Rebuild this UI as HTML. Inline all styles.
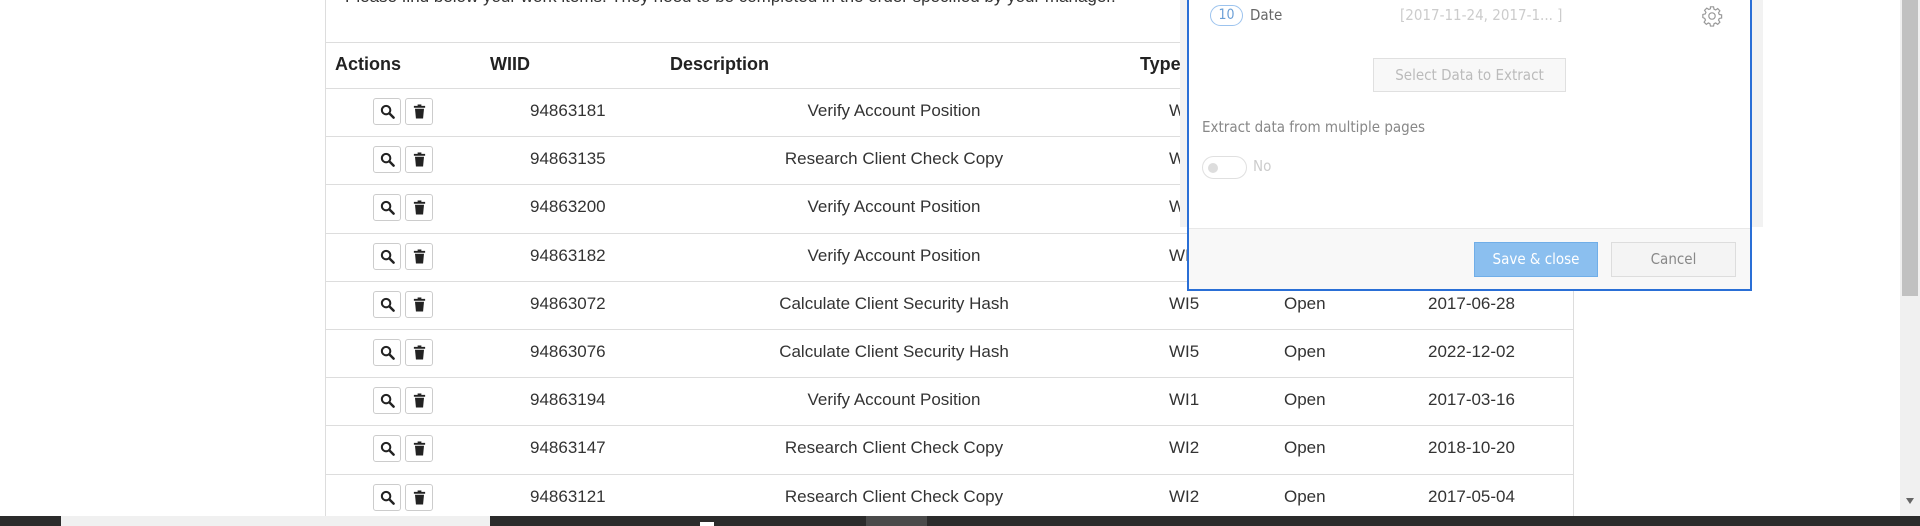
<!DOCTYPE html>
<html><head><meta charset="utf-8"><style>
*{margin:0;padding:0;box-sizing:border-box}
body{width:1920px;height:526px;overflow:hidden;background:#fff;position:relative;font-family:"Liberation Sans",Arial,sans-serif;color:#333}
.a{position:absolute}
.tbl{left:325px;top:0;width:1249px;height:516px;border-left:1px solid #ddd;border-right:1px solid #ddd}
.hl{position:absolute;left:325px;width:1249px;height:1px;background:#ddd}
.h{position:absolute;top:54px;font-weight:bold;font-size:18px;color:#222}
.row{position:absolute;left:325px;width:1249px;height:48px;border-top:1px solid #ddd}
.t{position:absolute;top:12px;font-size:17px;color:#333;white-space:nowrap}
.btn{position:absolute;top:9px;width:28px;height:27px;border:1px solid #ccc;border-radius:3px;background:#fff}
.btn svg{position:absolute;left:6px;top:5px}
.b1{left:48px}.b2{left:80px}
.c1{left:205px}.c2{left:369px;width:400px;text-align:center}.c3{left:844px}.c4{left:959px}.c5{left:1103px}
.dl{position:absolute;font-family:"DejaVu Sans Condensed","Liberation Sans",sans-serif}
</style></head><body>
<div class="a" style="left:345px;top:-13px;font-size:17px;color:#333;white-space:nowrap">Please find below your work items. They need to be completed in the order specified by your manager.</div>
<div class="a tbl"></div>
<div class="hl" style="top:42px"></div>
<div class="h" style="left:335px">Actions</div>
<div class="h" style="left:490px">WIID</div>
<div class="h" style="left:670px">Description</div>
<div class="h" style="left:1140px">Type</div>

<svg width="0" height="0" style="position:absolute"><defs>
<g id="mag"><circle cx="6.5" cy="6.5" r="4.5" fill="none" stroke="#222" stroke-width="2.2"/><path d="M10 10l4.5 4.5" stroke="#222" stroke-width="2.6" stroke-linecap="round"/></g>
<g id="tr"><rect x="2" y="2" width="12" height="2" fill="#222"/><rect x="6" y="0.5" width="4" height="2" fill="#222"/><path d="M3.2 5h9.6l-1 10.5H4.2z" fill="#222"/></g>
</defs></svg>

<div class="row" style="top:88px"><div class="btn b1"><svg width="15" height="15" viewBox="0 0 16 16"><use href="#mag"/></svg></div><div class="btn b2"><svg width="15" height="15" viewBox="0 0 16 16"><use href="#tr"/></svg></div><div class="t c1">94863181</div><div class="t c2">Verify Account Position</div><div class="t c3">WI1</div></div>
<div class="row" style="top:136px"><div class="btn b1"><svg width="15" height="15" viewBox="0 0 16 16"><use href="#mag"/></svg></div><div class="btn b2"><svg width="15" height="15" viewBox="0 0 16 16"><use href="#tr"/></svg></div><div class="t c1">94863135</div><div class="t c2">Research Client Check Copy</div><div class="t c3">WI2</div></div>
<div class="row" style="top:184px"><div class="btn b1"><svg width="15" height="15" viewBox="0 0 16 16"><use href="#mag"/></svg></div><div class="btn b2"><svg width="15" height="15" viewBox="0 0 16 16"><use href="#tr"/></svg></div><div class="t c1">94863200</div><div class="t c2">Verify Account Position</div><div class="t c3">WI1</div></div>
<div class="row" style="top:233px"><div class="btn b1"><svg width="15" height="15" viewBox="0 0 16 16"><use href="#mag"/></svg></div><div class="btn b2"><svg width="15" height="15" viewBox="0 0 16 16"><use href="#tr"/></svg></div><div class="t c1">94863182</div><div class="t c2">Verify Account Position</div><div class="t c3">WI1</div></div>
<div class="row" style="top:281px"><div class="btn b1"><svg width="15" height="15" viewBox="0 0 16 16"><use href="#mag"/></svg></div><div class="btn b2"><svg width="15" height="15" viewBox="0 0 16 16"><use href="#tr"/></svg></div><div class="t c1">94863072</div><div class="t c2">Calculate Client Security Hash</div><div class="t c3">WI5</div><div class="t c4">Open</div><div class="t c5">2017-06-28</div></div>
<div class="row" style="top:329px"><div class="btn b1"><svg width="15" height="15" viewBox="0 0 16 16"><use href="#mag"/></svg></div><div class="btn b2"><svg width="15" height="15" viewBox="0 0 16 16"><use href="#tr"/></svg></div><div class="t c1">94863076</div><div class="t c2">Calculate Client Security Hash</div><div class="t c3">WI5</div><div class="t c4">Open</div><div class="t c5">2022-12-02</div></div>
<div class="row" style="top:377px"><div class="btn b1"><svg width="15" height="15" viewBox="0 0 16 16"><use href="#mag"/></svg></div><div class="btn b2"><svg width="15" height="15" viewBox="0 0 16 16"><use href="#tr"/></svg></div><div class="t c1">94863194</div><div class="t c2">Verify Account Position</div><div class="t c3">WI1</div><div class="t c4">Open</div><div class="t c5">2017-03-16</div></div>
<div class="row" style="top:425px"><div class="btn b1"><svg width="15" height="15" viewBox="0 0 16 16"><use href="#mag"/></svg></div><div class="btn b2"><svg width="15" height="15" viewBox="0 0 16 16"><use href="#tr"/></svg></div><div class="t c1">94863147</div><div class="t c2">Research Client Check Copy</div><div class="t c3">WI2</div><div class="t c4">Open</div><div class="t c5">2018-10-20</div></div>
<div class="row" style="top:474px"><div class="btn b1"><svg width="15" height="15" viewBox="0 0 16 16"><use href="#mag"/></svg></div><div class="btn b2"><svg width="15" height="15" viewBox="0 0 16 16"><use href="#tr"/></svg></div><div class="t c1">94863121</div><div class="t c2">Research Client Check Copy</div><div class="t c3">WI2</div><div class="t c4">Open</div><div class="t c5">2017-05-04</div></div>

<!-- backdrop panel -->
<div class="a" style="left:1180px;top:0;width:583px;height:227px;background:#f2f2f2"></div>
<!-- dialog -->
<div class="a" style="left:1187px;top:-2px;width:565px;height:293px;border:2px solid #2a6fd6;background:#fff">
 <div class="a" style="left:0;right:0;top:228px;bottom:0;background:#f8f8f8;border-top:1px solid #e8e8e8"></div>
</div>
<div class="a dl" style="left:1210px;top:5px;width:33px;height:21px;border:1px solid #9cc3ee;border-radius:11px;font-size:14px;color:#6b9fd6;text-align:center;line-height:19px">10</div>
<div class="a dl" style="left:1250px;top:6px;font-size:15px;color:#666">Date</div>
<div class="a dl" style="left:1400px;top:6px;font-size:15px;color:#ccc">[2017-11-24, 2017-1... ]</div>
<svg class="a" style="left:1701px;top:5px" width="22" height="22" viewBox="0 0 24 24" fill="none" stroke="#999" stroke-width="1.3"><circle cx="12" cy="12" r="3.5"/><path d="M10.3 2h3.4l.5 2.6 1.8.8 2.2-1.5 2.4 2.4-1.5 2.2.8 1.8 2.6.5v3.4l-2.6.5-.8 1.8 1.5 2.2-2.4 2.4-2.2-1.5-1.8.8-.5 2.6h-3.4l-.5-2.6-1.8-.8-2.2 1.5-2.4-2.4 1.5-2.2-.8-1.8L2 13.7v-3.4l2.6-.5.8-1.8-1.5-2.2 2.4-2.4 2.2 1.5 1.8-.8z"/></svg>
<div class="a dl" style="left:1373px;top:58px;width:193px;height:34px;border:1px solid #e0e0e0;background:#f8f8f8;color:#bbb;font-size:15px;text-align:center;line-height:32px">Select Data to Extract</div>
<div class="a dl" style="left:1202px;top:118px;font-size:15px;color:#888">Extract data from multiple pages</div>
<div class="a" style="left:1202px;top:156px;width:45px;height:23px;border:1px solid #e0e0e0;border-radius:12px;background:#fff"><div class="a" style="left:5px;top:6px;width:10px;height:10px;border-radius:50%;background:#ddd"></div></div>
<div class="a dl" style="left:1253px;top:157px;font-size:15px;color:#ccc">No</div>
<div class="a dl" style="left:1474px;top:242px;width:124px;height:35px;background:#8bbfef;border:1px solid #70aee8;color:#fff;font-size:15px;text-align:center;line-height:33px">Save &amp; close</div>
<div class="a dl" style="left:1611px;top:242px;width:125px;height:35px;background:#f4f4f4;border:1px solid #ddd;color:#888;font-size:15px;text-align:center;line-height:33px">Cancel</div>
<!-- scrollbar -->
<div class="a" style="left:1900px;top:0;width:20px;height:516px;background:#f0f0f0"></div>
<div class="a" style="left:1902px;top:0;width:16px;height:296px;background:#c1c1c1"></div>
<div class="a" style="left:1906px;top:498px;width:0;height:0;border-left:4px solid transparent;border-right:4px solid transparent;border-top:6px solid #666"></div>
<!-- taskbar -->
<div class="a" style="left:0;top:516px;width:1920px;height:10px;background:#2b2b2b"></div>
<div class="a" style="left:61px;top:516px;width:429px;height:10px;background:#f0f0f0"></div>
<div class="a" style="left:866px;top:516px;width:61px;height:10px;background:#4a4a4a"></div>
<div class="a" style="left:700px;top:522px;width:14px;height:4px;background:#fff"></div>
</body></html>
